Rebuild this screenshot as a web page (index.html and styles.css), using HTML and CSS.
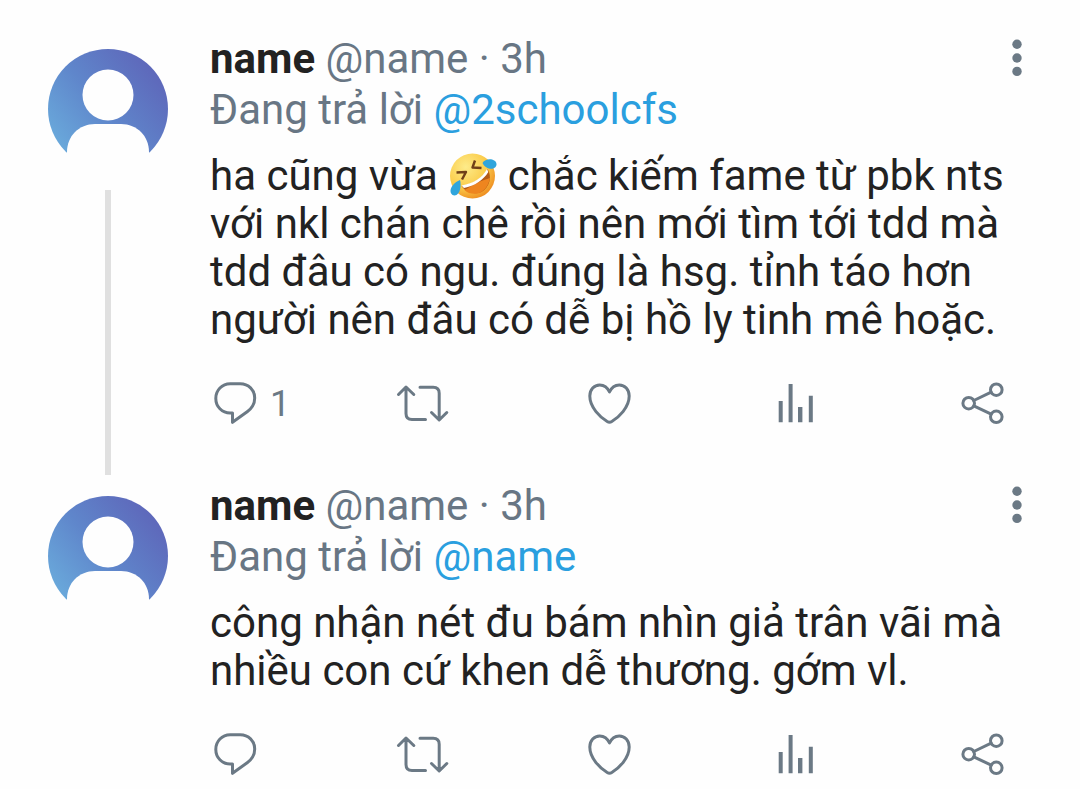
FILE: index.html
```html
<!DOCTYPE html>
<html lang="vi">
<head>
  <meta charset="UTF-8" />
  <meta name="viewport" content="width=device-width, initial-scale=1.0"/>
  <title>Trả lời</title>
  <link rel="stylesheet" href="styles.css">
</head>
<body>

  <!-- Icon -->
  <svg class="icon-defs" aria-hidden="true">
    <defs>
      <linearGradient id="avatarColor" x1="0" y1="0.75" x2="0.8" y2="0.1">
        <stop offset="0" stop-color="#6aabdc"/>
        <stop offset="0.5" stop-color="#5f86cb"/>
        <stop offset="1" stop-color="#5e69bb"/>
      </linearGradient>
      <radialGradient id="faceColor" cx="0.35" cy="0.3" r="0.75">
        <stop offset="0" stop-color="#fdeb8a"/>
        <stop offset="0.6" stop-color="#fbcd4c"/>
        <stop offset="1" stop-color="#ee8d20"/>
      </radialGradient>
      <symbol id="avatar" viewBox="0 0 120 120">
        <circle cx="60" cy="60" r="60" fill="url(#avatarColor)"/>
        <circle cx="60" cy="46" r="25.5" fill="#fefefe"/>
        <path d="M19 120V103C19 87 31 75 47 75H73C89 75 101 87 101 103V120Z" fill="#fefefe"/>
      </symbol>
      <symbol id="reply" viewBox="0 0 48 48">
        <path d="M20.5 33H18.2C10 33 3.8 26.5 3.8 18.4S10 3.8 18.2 3.8H28.2C36.5 3.8 42.7 10 42.7 18C42.7 23.5 40 28.2 35.5 31.5L20.5 42.3Z"/>
      </symbol>
      <symbol id="retweet" viewBox="0 0 48 48" overflow="visible">
        <path d="M-0.5 14.5L7 7L14.8 14.5M7 7.5V33.5Q7 39.5 13 39.5H26.5M21 7.3H34.2Q40.2 7.3 40.2 13.3V39.5M32.5 32.5L40.2 40L47.8 32.5"/>
      </symbol>
      <symbol id="heart" viewBox="0 0 48 48">
        <path d="M23.5 12C21.5 7.5 17.8 4.9 13.7 4.9C8.2 4.9 3.8 9.5 3.8 16C3.8 27.5 14.5 37.5 21.2 41.5Q23.5 42.8 25.8 41.5C32.5 37.5 43.2 27.5 43.2 16C43.2 9.5 38.8 4.9 33.3 4.9C29.2 4.9 25.5 7.5 23.5 12Z"/>
      </symbol>
      <symbol id="stats" viewBox="0 0 48 48">
        <path stroke="none" fill="currentColor" d="M6.7 21h4v21.3h-4zM16.6 4h4v38.3h-4zM26 27h4.4v15.3h-4.4zM36.8 15.7h4v26.6h-4z"/>
      </symbol>
      <symbol id="share" viewBox="0 0 48 48">
        <path d="M14.8 20.5L32.2 12.2M14.8 25.8L32.2 34.2"/>
        <circle cx="9.7" cy="23.2" r="5.8"/>
        <circle cx="37.3" cy="9.7" r="5.8"/>
        <circle cx="37.3" cy="36.8" r="5.8"/>
      </symbol>
      <symbol id="dots" viewBox="0 0 22 40">
        <circle cx="11" cy="6.3" r="4.7"/>
        <circle cx="11" cy="20" r="4.7"/>
        <circle cx="11" cy="33.4" r="4.7"/>
      </symbol>
    </defs>
  </svg>

  <main class="thread">
    <article class="tweet">
      <div class="side">
        <svg class="avatar" role="img" aria-label="name"><use href="#avatar"/></svg>
        <div class="line"></div>
      </div>
      <div class="content">
        <header class="top">
          <div class="info">
            <div><strong class="name">name</strong> @name · 3h</div>
            <div>Đang trả lời <a href="#">@2schoolcfs</a></div>
          </div>
          <button class="more" aria-label="Thêm"><svg><use href="#dots"/></svg></button>
        </header>
        <p class="text">ha cũng vừa <svg class="emoji" viewBox="0 0 48 48" role="img" aria-label="cười lăn">
            <circle cx="24" cy="24" r="22.5" fill="url(#faceColor)"/>
            <path d="M13 34C25 32 34 26 39 17C44 25 41 35 33 40C25 43 17 40 13 34Z" fill="#b45a16"/>
            <path d="M16 38C24 33 34 28 41.5 26C40 34 36 38 32 40.5C27 43 20 42 16 38Z" fill="#ee851f"/>
            <path d="M13 33.5C25 31.5 34 25.5 38.5 17L39.8 20C35 28 26 34 15.5 36Z" fill="#fff"/>
            <path d="M8 20.5L17.5 20L13.5 27.5M26.5 8.5L24 15.5L33 16" fill="none" stroke="#704018" stroke-width="2.4" stroke-linejoin="round"/>
            <path d="M11.5 28C13 33 12 43 6 43.5C0 43 0 33 11.5 28Z" fill="#30a5dc"/>
            <path d="M34 11C37 6 47 6 48 12C48 19 37 18 34 11Z" fill="#30a5dc"/>
          </svg> chắc kiếm fame từ pbk nts với nkl chán chê rồi nên mới tìm tới tdd mà tdd đâu có ngu. đúng là hsg. tỉnh táo hơn người nên đâu có dễ bị hồ ly tinh mê hoặc.</p>
        <div class="actions">
          <button aria-label="Trả lời, 1"><svg><use href="#reply"/></svg><span class="count">1</span></button>
          <button aria-label="Tweet lại"><svg><use href="#retweet"/></svg></button>
          <button aria-label="Thích"><svg><use href="#heart"/></svg></button>
          <button aria-label="Thống kê"><svg><use href="#stats"/></svg></button>
          <button aria-label="Chia sẻ"><svg><use href="#share"/></svg></button>
        </div>
      </div>
    </article>

    <article class="tweet">
      <div class="side">
        <svg class="avatar" role="img" aria-label="name"><use href="#avatar"/></svg>
      </div>
      <div class="content">
        <header class="top">
          <div class="info">
            <div><strong class="name">name</strong> @name · 3h</div>
            <div>Đang trả lời <a href="#">@name</a></div>
          </div>
          <button class="more" aria-label="Thêm"><svg><use href="#dots"/></svg></button>
        </header>
        <p class="text">công nhận nét đu bám nhìn giả trân vãi mà nhiều con cứ khen dễ thương. gớm vl.</p>
        <div class="actions">
          <button aria-label="Trả lời"><svg><use href="#reply"/></svg></button>
          <button aria-label="Tweet lại"><svg><use href="#retweet"/></svg></button>
          <button aria-label="Thích"><svg><use href="#heart"/></svg></button>
          <button aria-label="Thống kê"><svg><use href="#stats"/></svg></button>
          <button aria-label="Chia sẻ"><svg><use href="#share"/></svg></button>
        </div>
      </div>
    </article>
  </main>

</body>
</html>
```
FILE: styles.css
```css
body {
  margin: 0;
  background: #fefefe;
  font-family: Roboto, "Noto Sans", sans-serif;
  font-size: 42px;
  color: #222;
}

.icon-defs {
  position: absolute;
  width: 0;
  height: 0;
}

.thread {
  padding: 33px 52px 8px 48px;
}

.tweet {
  display: flex;
  gap: 42px;
}

.side {
  display: flex;
  flex-direction: column;
  align-items: center;
  padding-top: 16px;
}

.avatar {
  width: 120px;
  height: 120px;
}

.line {
  flex: 1;
  width: 6px;
  margin: 21px 0 5px;
  background: #e0e0e0;
}

.content {
  flex: 1;
  min-width: 0;
}

.tweet:not(:last-child) .content {
  padding-bottom: 52px;
}

.top {
  display: flex;
  justify-content: space-between;
  align-items: flex-start;
}

.info {
  line-height: 51px;
  color: #687684;
}

.name {
  color: #222;
}

a {
  color: #2a9fdf;
  text-decoration: none;
}

button {
  display: flex;
  align-items: center;
  padding: 0;
  border: none;
  background: none;
  font-family: inherit;
  color: #6b7985;
  cursor: pointer;
}

.more {
  margin-top: 5px;
}

.more svg {
  width: 22px;
  height: 40px;
  fill: currentColor;
}

.text {
  margin: 17px 0 36px;
  line-height: 48px;
}

.emoji {
  width: 49px;
  height: 48px;
  vertical-align: top;
}

.actions {
  display: grid;
  grid-template-columns: repeat(4, 1fr) 48px;
  padding: 0 21px 0 2px;
}

.actions svg {
  flex: none;
  width: 48px;
  height: 48px;
  overflow: visible;
  fill: none;
  stroke: currentColor;
  stroke-width: 3;
  stroke-linecap: round;
  stroke-linejoin: round;
}

.count {
  margin-left: 10px;
  font-size: 36px;
}
```
